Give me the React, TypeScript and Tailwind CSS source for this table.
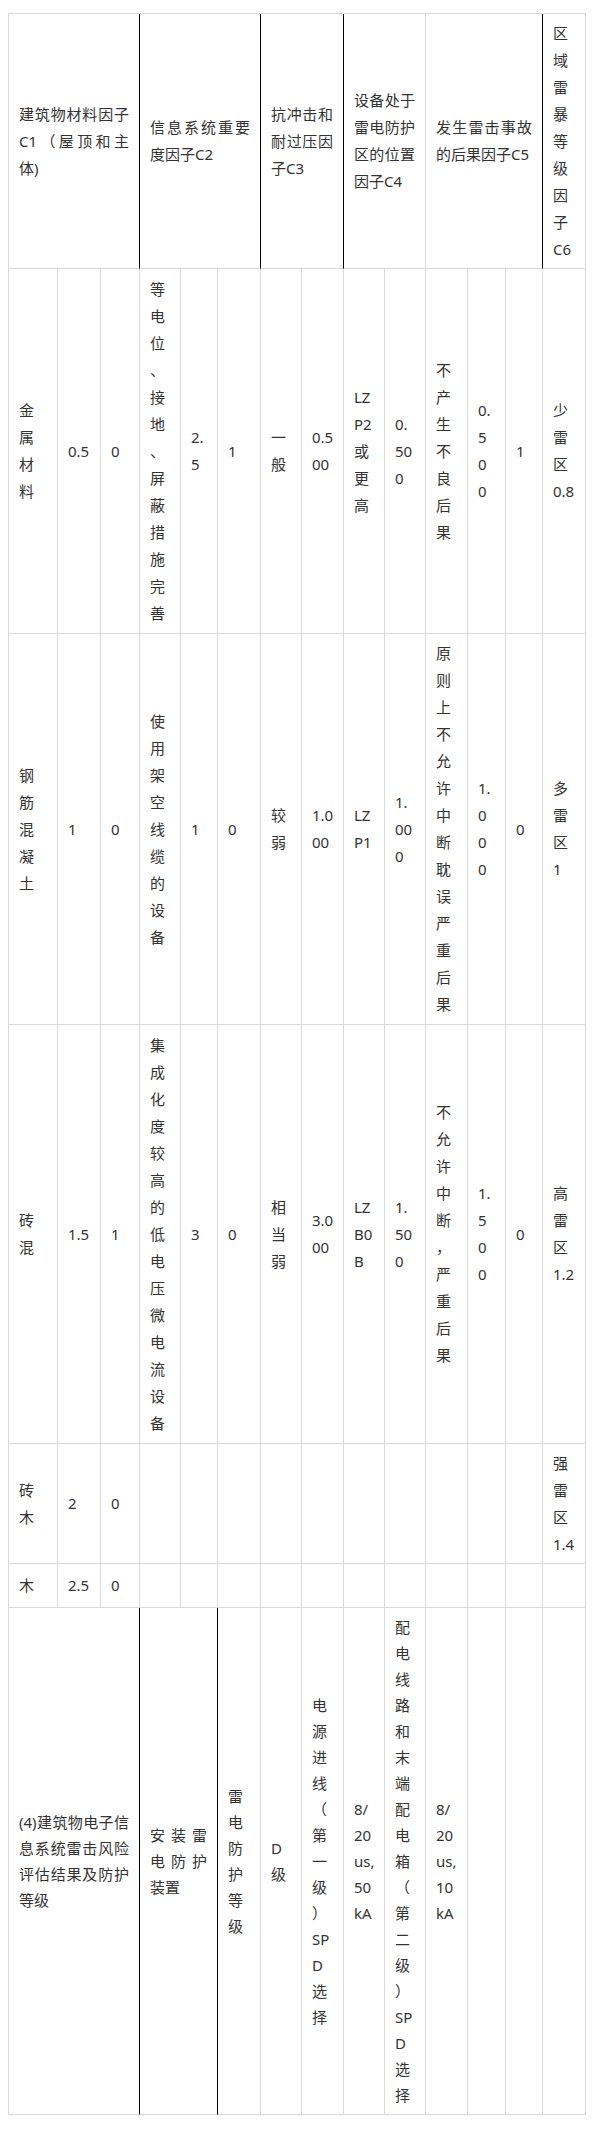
import React from "react";

type CellProps = {
  lines?: string[];
  span?: string;
  black?: boolean;
  tight?: boolean;
  j?: number;
};

function Cell({ lines = [], span = "", black = false, tight = false, j = 0 }: CellProps) {
  return (
    <div
      className={`${span} flex flex-col justify-center px-[10px] border-b border-r border-b-[#d9d9d9] ${
        black ? "border-r-black" : "border-r-[#d9d9d9]"
      }`}
    >
      {lines.map((t, i) => (
        <div
          key={i}
          className={`${tight ? "h-[26px] leading-[26px]" : "h-[27px] leading-[27px]"} ${
            i < j ? "text-justify [text-align-last:justify]" : "whitespace-nowrap"
          }`}
        >
          {t}
        </div>
      ))}
    </div>
  );
}

const ch = (s: string) => Array.from(s);

export default function App() {
  return (
    <div className="min-h-[2143px] bg-white pt-[13px] pl-[8px] pb-[29px] font-['Noto_Sans','Noto_Sans_CJK_SC',sans-serif] text-[15px] text-[#333]">
      <div className="grid w-fit grid-cols-[49px_43px_39px_41px_37px_43px_41px_42px_41px_41px_42px_38px_37px_43px] grid-rows-[255px_365px_391px_419px_120px_44px_507px] border-t border-l border-t-[#d9d9d9] border-l-[#d9d9d9]">
        {/* Header */}
        <Cell span="col-span-3" black j={2} lines={["建筑物材料因子", "C1（屋顶和主", "体)"]} />
        <Cell span="col-span-3" black j={1} lines={["信息系统重要", "度因子C2"]} />
        <Cell span="col-span-2" black j={2} lines={["抗冲击和", "耐过压因", "子C3"]} />
        <Cell span="col-span-2" j={3} lines={["设备处于", "雷电防护", "区的位置", "因子C4"]} />
        <Cell span="col-span-3" black j={1} lines={["发生雷击事故", "的后果因子C5"]} />
        <Cell lines={[...ch("区域雷暴等级因子"), "C6"]} />

        {/* Row 1 */}
        <Cell lines={ch("金属材料")} />
        <Cell lines={["0.5"]} />
        <Cell lines={["0"]} />
        <Cell lines={ch("等电位、接地、屏蔽措施完善")} />
        <Cell lines={["2.", "5"]} />
        <Cell lines={["1"]} />
        <Cell lines={ch("一般")} />
        <Cell lines={["0.5", "00"]} />
        <Cell lines={["LZ", "P2", "或", "更", "高"]} />
        <Cell lines={["0.", "50", "0"]} />
        <Cell lines={ch("不产生不良后果")} />
        <Cell lines={["0.", "5", "0", "0"]} />
        <Cell lines={["1"]} />
        <Cell lines={[...ch("少雷区"), "0.8"]} />

        {/* Row 2 */}
        <Cell lines={ch("钢筋混凝土")} />
        <Cell lines={["1"]} />
        <Cell lines={["0"]} />
        <Cell lines={ch("使用架空线缆的设备")} />
        <Cell lines={["1"]} />
        <Cell lines={["0"]} />
        <Cell lines={ch("较弱")} />
        <Cell lines={["1.0", "00"]} />
        <Cell lines={["LZ", "P1"]} />
        <Cell lines={["1.", "00", "0"]} />
        <Cell lines={ch("原则上不允许中断耽误严重后果")} />
        <Cell lines={["1.", "0", "0", "0"]} />
        <Cell lines={["0"]} />
        <Cell lines={[...ch("多雷区"), "1"]} />

        {/* Row 3 */}
        <Cell lines={ch("砖混")} />
        <Cell lines={["1.5"]} />
        <Cell lines={["1"]} />
        <Cell lines={ch("集成化度较高的低电压微电流设备")} />
        <Cell lines={["3"]} />
        <Cell lines={["0"]} />
        <Cell lines={ch("相当弱")} />
        <Cell lines={["3.0", "00"]} />
        <Cell lines={["LZ", "B0", "B"]} />
        <Cell lines={["1.", "50", "0"]} />
        <Cell lines={ch("不允许中断，严重后果")} />
        <Cell lines={["1.", "5", "0", "0"]} />
        <Cell lines={["0"]} />
        <Cell lines={[...ch("高雷区"), "1.2"]} />

        {/* Row 4 */}
        <Cell lines={ch("砖木")} />
        <Cell lines={["2"]} />
        <Cell lines={["0"]} />
        <Cell />
        <Cell />
        <Cell />
        <Cell />
        <Cell />
        <Cell />
        <Cell />
        <Cell />
        <Cell />
        <Cell />
        <Cell lines={[...ch("强雷区"), "1.4"]} />

        {/* Row 5 */}
        <Cell lines={["木"]} />
        <Cell lines={["2.5"]} />
        <Cell lines={["0"]} />
        <Cell />
        <Cell />
        <Cell />
        <Cell />
        <Cell />
        <Cell />
        <Cell />
        <Cell />
        <Cell />
        <Cell />
        <Cell />

        {/* Row 6 */}
        <Cell
          span="col-span-3"
          black
          tight
          j={3}
          lines={["(4)建筑物电子信", "息系统雷击风险", "评估结果及防护", "等级"]}
        />
        <Cell span="col-span-2" black tight j={2} lines={["安装雷", "电防护", "装置"]} />
        <Cell tight lines={ch("雷电防护等级")} />
        <Cell tight lines={["D", "级"]} />
        <Cell tight lines={[...ch("电源进线（第一级）"), "SP", "D", "选", "择"]} />
        <Cell tight lines={["8/", "20", "us,", "50", "kA"]} />
        <Cell tight lines={[...ch("配电线路和末端配电箱（第二级）"), "SP", "D", "选", "择"]} />
        <Cell tight lines={["8/", "20", "us,", "10", "kA"]} />
        <Cell />
        <Cell />
        <Cell />
      </div>
    </div>
  );
}
